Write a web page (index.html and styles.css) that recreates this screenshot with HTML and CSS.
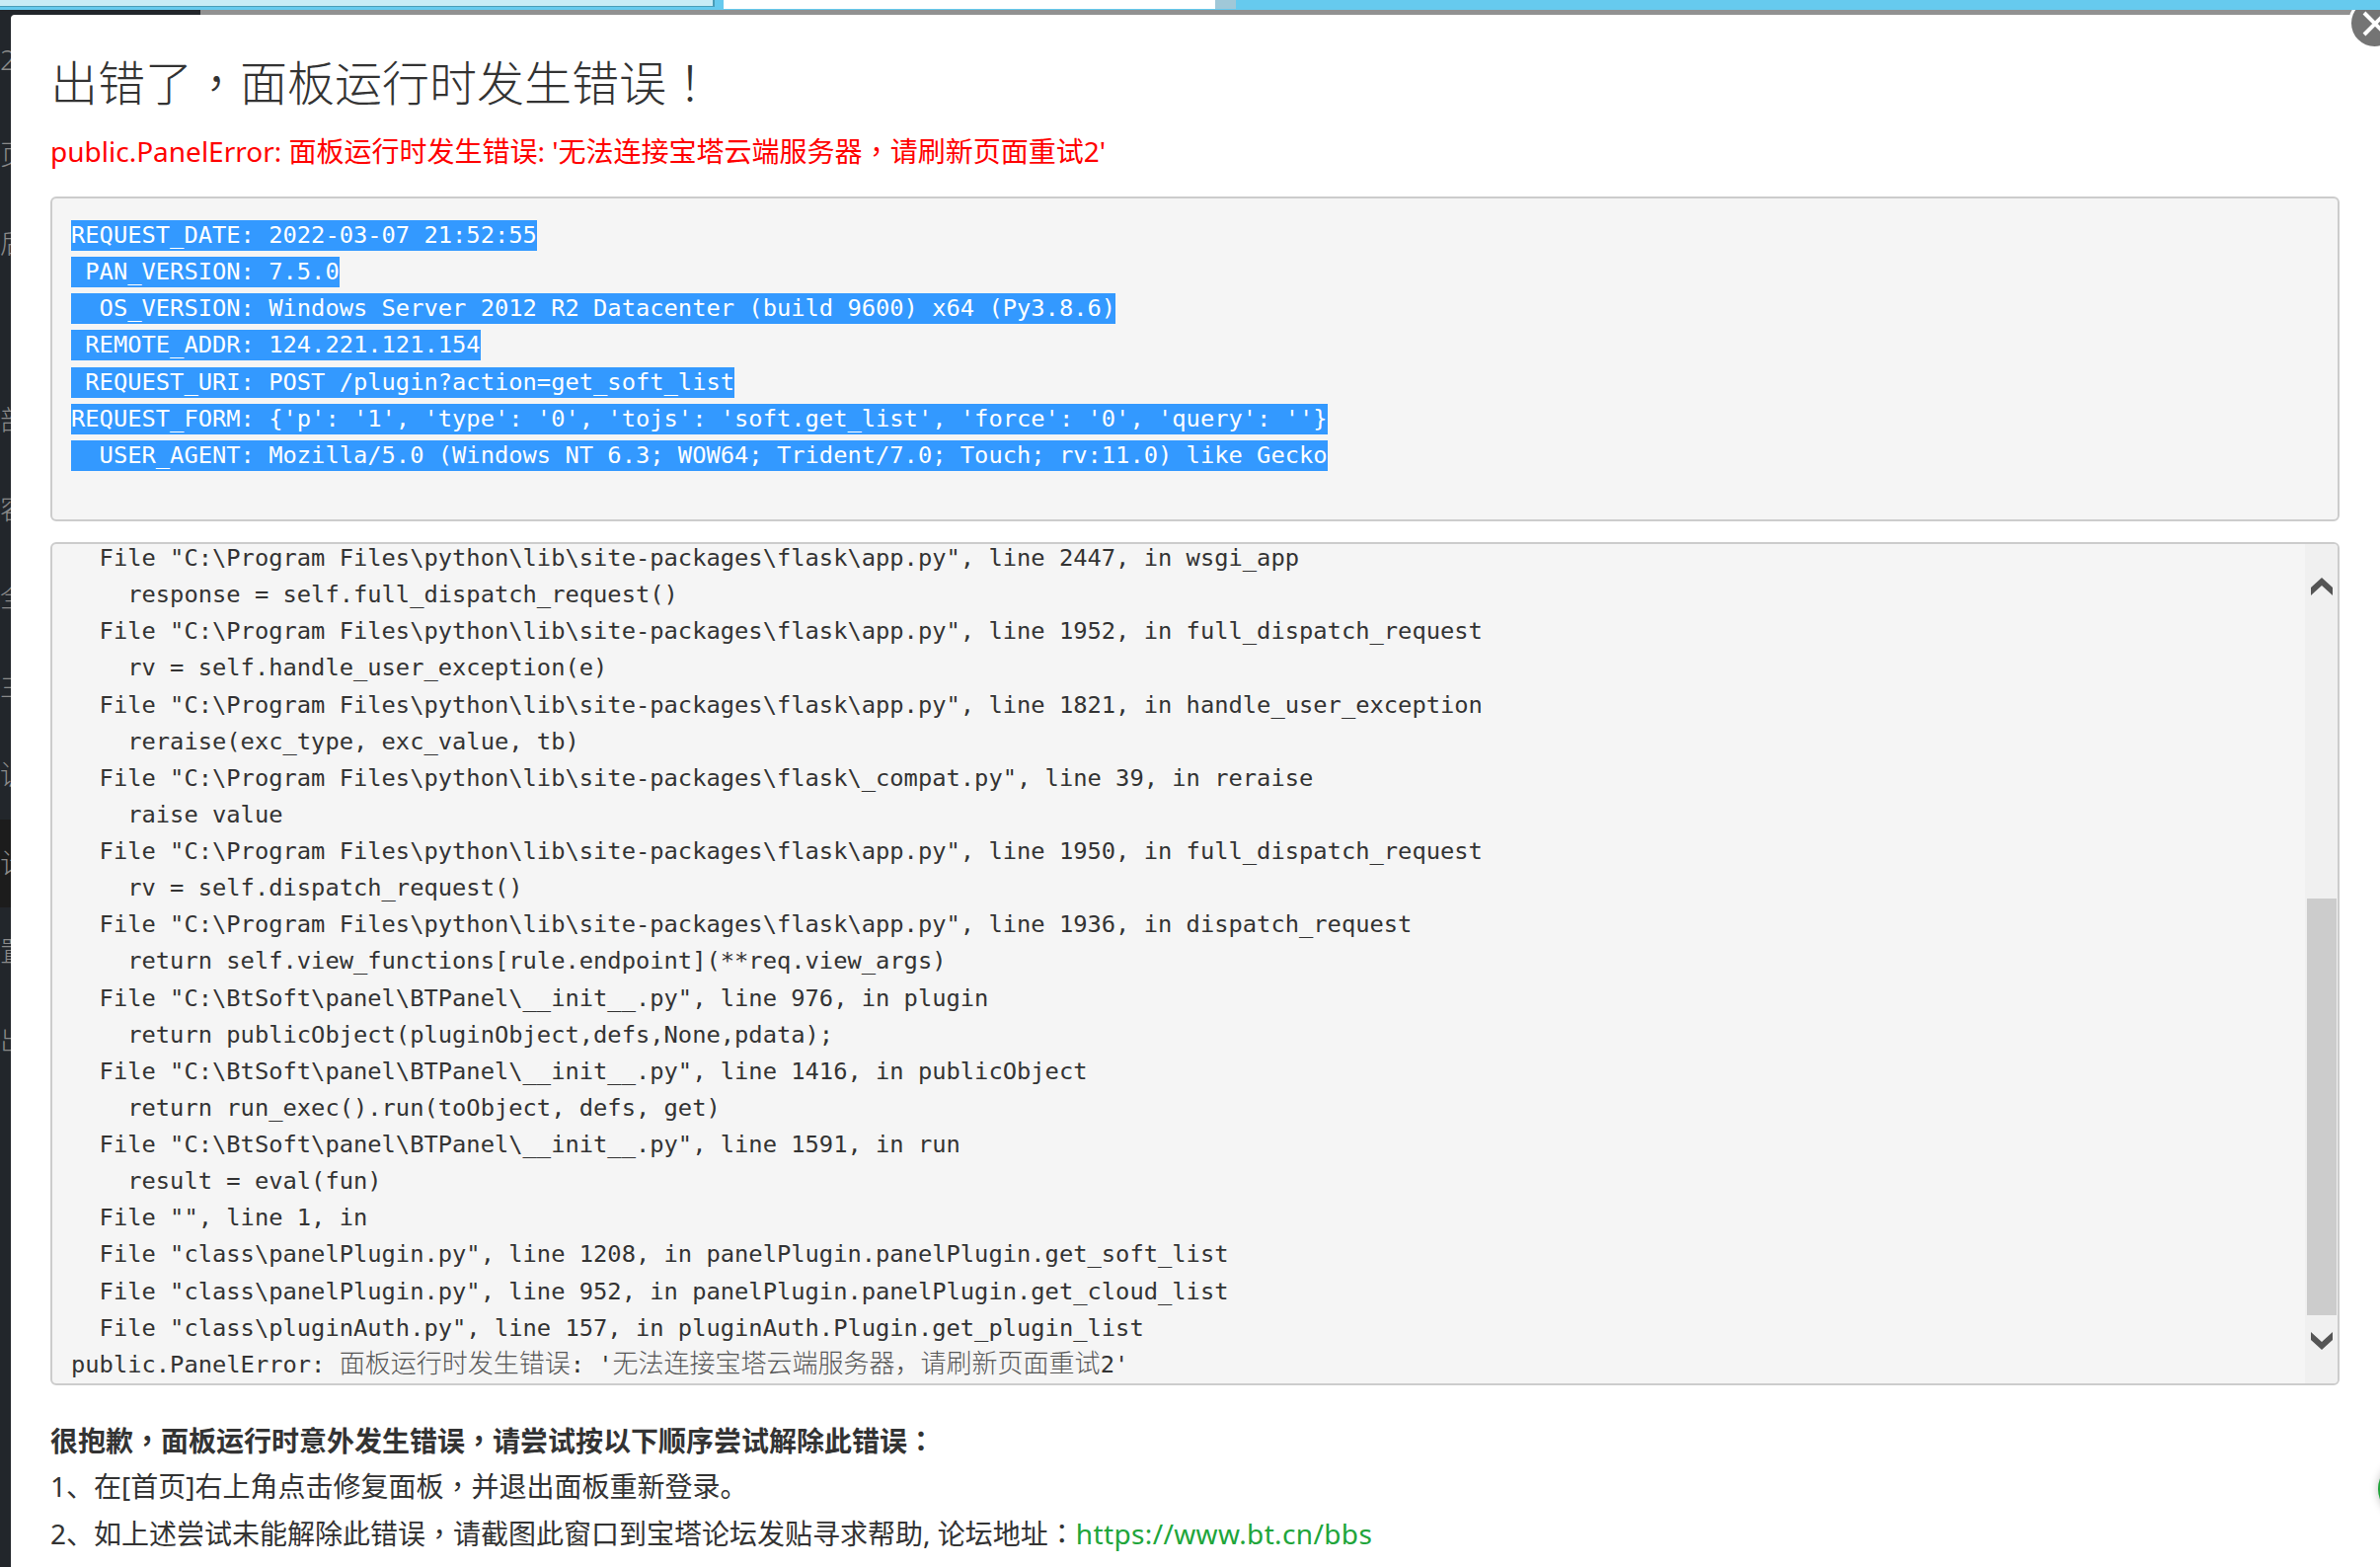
FILE: index.html
```html
<!DOCTYPE html>
<html lang="zh-CN">
<head>
<meta charset="utf-8">
<title>出错了</title>
<link rel="stylesheet" href="styles.css">
</head>
<body>
<div class="tabs">
  <div class="tab tab-light"></div>
  <div class="tab tab-white"></div>
  <div class="tab tab-grey"></div>
</div>
<div class="shade"><div class="shade-dark"></div></div>
<div class="main">
  <nav class="sidebar">
    <div class="side-top">2</div>
    <div class="side-item">页</div>
    <div class="side-item">后</div>
    <div class="side-item">&nbsp;</div>
    <div class="side-item">部</div>
    <div class="side-item">容</div>
    <div class="side-item">全</div>
    <div class="side-item">主</div>
    <div class="side-item">训</div>
    <div class="side-item side-active">计</div>
    <div class="side-item">置</div>
    <div class="side-item">出</div>
  </nav>
  <section class="modal">
    <h1 class="title">出错了<span class="pn" lang="zh-TW">&#xFF0C;</span>面板运行时发生错误<span class="pn" lang="zh-TW">&#xFF01;</span></h1>
    <p class="error"><span class="lat">public.PanelError:</span> 面板运行时发生错误: '无法连接宝塔云端服务器<span class="pn" lang="zh-TW">&#xFF0C;</span>请刷新页面重试2'</p>
    <div class="meta">
      <span class="sel">REQUEST_DATE: 2022-03-07 21:52:55</span>
      <span class="sel"> PAN_VERSION: 7.5.0</span>
      <span class="sel">  OS_VERSION: Windows Server 2012 R2 Datacenter (build 9600) x64 (Py3.8.6)</span>
      <span class="sel"> REMOTE_ADDR: 124.221.121.154</span>
      <span class="sel"> REQUEST_URI: POST /plugin?action=get_soft_list</span>
      <span class="sel">REQUEST_FORM: {'p': '1', 'type': '0', 'tojs': 'soft.get_list', 'force': '0', 'query': ''}</span>
      <span class="sel">  USER_AGENT: Mozilla/5.0 (Windows NT 6.3; WOW64; Trident/7.0; Touch; rv:11.0) like Gecko</span>
    </div>
    <div class="trace-box">
      <pre class="trace">  File "C:\Program Files\python\lib\site-packages\flask\app.py", line 2447, in wsgi_app
    response = self.full_dispatch_request()
  File "C:\Program Files\python\lib\site-packages\flask\app.py", line 1952, in full_dispatch_request
    rv = self.handle_user_exception(e)
  File "C:\Program Files\python\lib\site-packages\flask\app.py", line 1821, in handle_user_exception
    reraise(exc_type, exc_value, tb)
  File "C:\Program Files\python\lib\site-packages\flask\_compat.py", line 39, in reraise
    raise value
  File "C:\Program Files\python\lib\site-packages\flask\app.py", line 1950, in full_dispatch_request
    rv = self.dispatch_request()
  File "C:\Program Files\python\lib\site-packages\flask\app.py", line 1936, in dispatch_request
    return self.view_functions[rule.endpoint](**req.view_args)
  File "C:\BtSoft\panel\BTPanel\__init__.py", line 976, in plugin
    return publicObject(pluginObject,defs,None,pdata);
  File "C:\BtSoft\panel\BTPanel\__init__.py", line 1416, in publicObject
    return run_exec().run(toObject, defs, get)
  File "C:\BtSoft\panel\BTPanel\__init__.py", line 1591, in run
    result = eval(fun)
  File "", line 1, in
  File "class\panelPlugin.py", line 1208, in panelPlugin.panelPlugin.get_soft_list
  File "class\panelPlugin.py", line 952, in panelPlugin.panelPlugin.get_cloud_list
  File "class\pluginAuth.py", line 157, in pluginAuth.Plugin.get_plugin_list
public.PanelError: <span class="cjk">面板运行时发生错误</span>: '<span class="cjk">无法连接宝塔云端服务器&#xFF0C;请刷新页面重试</span>2'</pre>
      <div class="scrollbar">
        <svg class="arrow arrow-up" viewBox="0 0 22 18"><polygon points="11,0 22,10 22,18 11,8 0,18 0,10"/></svg>
        <div class="thumb"></div>
        <svg class="arrow arrow-down" viewBox="0 0 22 18"><polygon points="11,18 22,8 22,0 11,10 0,0 0,8"/></svg>
      </div>
    </div>
    <div class="help">
      <p class="help-head">很抱歉<span class="pn" lang="zh-TW">&#xFF0C;</span>面板运行时意外发生错误<span class="pn" lang="zh-TW">&#xFF0C;</span>请尝试按以下顺序尝试解除此错误<span class="pn" lang="zh-TW">&#xFF1A;</span></p>
      <p>1、在[首页]右上角点击修复面板<span class="pn" lang="zh-TW">&#xFF0C;</span>并退出面板重新登录。</p>
      <p>2、如上述尝试未能解除此错误<span class="pn" lang="zh-TW">&#xFF0C;</span>请截图此窗口到宝塔论坛发贴寻求帮助, 论坛地址<span class="pn" lang="zh-TW">&#xFF1A;</span><a class="link" href="#">https://www.bt.cn/bbs</a></p>
    </div>
  </section>
</div>
<div class="close"><svg viewBox="0 0 26 26"><path d="M2 2 L24 24 M24 2 L2 24"/></svg></div>
<div class="float-dot"></div>
</body>
</html>
```
FILE: styles.css
```css
* { box-sizing: border-box; }
html, body { margin: 0; padding: 0; }
body {
  position: relative;
  width: 2411px;
  height: 1587px;
  overflow: hidden;
  background: #fff;
  color: #333;
  font-family: "Noto Sans", "Noto Sans CJK SC", sans-serif;
}
.tabs {
  position: relative;
  z-index: 3;
  display: flex;
  align-items: flex-start;
  height: 10px;
  background: #66caee;
}
.tab-light { width: 724px; height: 7px; background: #c8ecf6; border-bottom: 1px solid #4a9db8; border-right: 2px solid #4a9db8; }
.tab-white { width: 498px; height: 9px; margin-left: 9px; background: #fff; }
.tab-grey { width: 21px; height: 9px; background: #a0c8d8; }
.shade { height: 5px; background: #919191; }
.shade-dark { width: 203px; height: 5px; background: #22262b; }
.main { display: flex; height: 1572px; background: #22262b; }
.sidebar {
  width: 11px;
  flex: none;
  overflow: hidden;
  color: #8a8a8a;
  font-size: 28px;
  font-family: "Noto Sans", "Noto Sans CJK SC", sans-serif;
  font-weight: 300;
}
.side-top { height: 97px; padding-top: 26px; line-height: 38px; white-space: nowrap; }
.side-item { height: 89.7px; line-height: 89.7px; white-space: nowrap; margin-right: -40px; }
.side-active { background: #1c1c1c; }
.modal {
  flex: 1;
  min-width: 0;
  background: #fff;
  border-top-left-radius: 4px;
  padding: 36px 41px 0 40px;
}
.title {
  margin: 0;
  height: 60px;
  font-size: 48px;
  line-height: 60px;
  font-weight: 300;
  color: #333;
  font-family: "Noto Sans CJK SC", sans-serif;
}
.pn { font-family: "Noto Sans CJK TC", "Noto Sans CJK SC", sans-serif; }
.error {
  margin: 21px 0 0;
  height: 40px;
  font-size: 28px;
  line-height: 40px;
  font-weight: 400;
  color: #f00;
}
.meta, .trace {
  font-family: "DejaVu Sans Mono", "Noto Sans CJK SC", monospace;
  font-size: 23.76px;
  color: #333;
}
.meta {
  margin-top: 27px;
  height: 329px;
  padding: 22px 19px 0;
  background: #f5f5f5;
  border: 2px solid #ccc;
  border-radius: 6px;
}
.sel {
  display: block;
  width: fit-content;
  height: 31px;
  line-height: 31px;
  margin-bottom: 6.17px;
  white-space: pre;
  background: #3399ff;
  color: #fff;
}
.trace-box {
  display: flex;
  margin-top: 21px;
  height: 854px;
  overflow: hidden;
  background: #f5f5f5;
  border: 2px solid #ccc;
  border-radius: 6px;
}
.trace {
  flex: 1;
  min-width: 0;
  margin: -4px 0 0;
  padding: 0 0 0 19px;
  line-height: 37.13px;
  white-space: pre;
  overflow: hidden;
}
.cjk {
  font-family: "Noto Sans CJK SC", sans-serif;
  font-size: 26px;
  font-weight: 300;
  color: #555;
  line-height: 1;
}
.scrollbar {
  flex: none;
  width: 33px;
  display: flex;
  flex-direction: column;
  align-items: center;
  padding-top: 34px;
  background: #f0f0f0;
}
.arrow { width: 22px; height: 18px; flex: none; fill: #555; }
.thumb { width: 30px; height: 422px; flex: none; margin-top: 307px; background: #ccc; }
.arrow-down { margin-top: 17px; }
.help { margin-top: 30.5px; font-size: 28px; line-height: 48px; font-weight: 400; color: #333; }
.help p { margin: 0; height: 48px; }
.help .help-head { font-weight: 700; margin-bottom: -1.5px; }
.link { color: #20a53a; text-decoration: none; letter-spacing: .36px; }
.close {
  position: absolute;
  z-index: 2;
  left: 2382px;
  top: 0;
  width: 47px;
  height: 47px;
  border-radius: 50%;
  background: #747474;
  box-shadow: 0 0 0 3px #fff;
  display: flex;
  align-items: center;
  justify-content: center;
}
.close svg { width: 26px; height: 26px; fill: none; stroke: #fff; stroke-width: 4; }
.float-dot {
  position: absolute;
  left: 2409px;
  top: 1478px;
  width: 60px;
  height: 60px;
  border-radius: 50%;
  background: #20a53a;
  box-shadow: 0 0 8px rgba(0,0,0,.25);
}
```
